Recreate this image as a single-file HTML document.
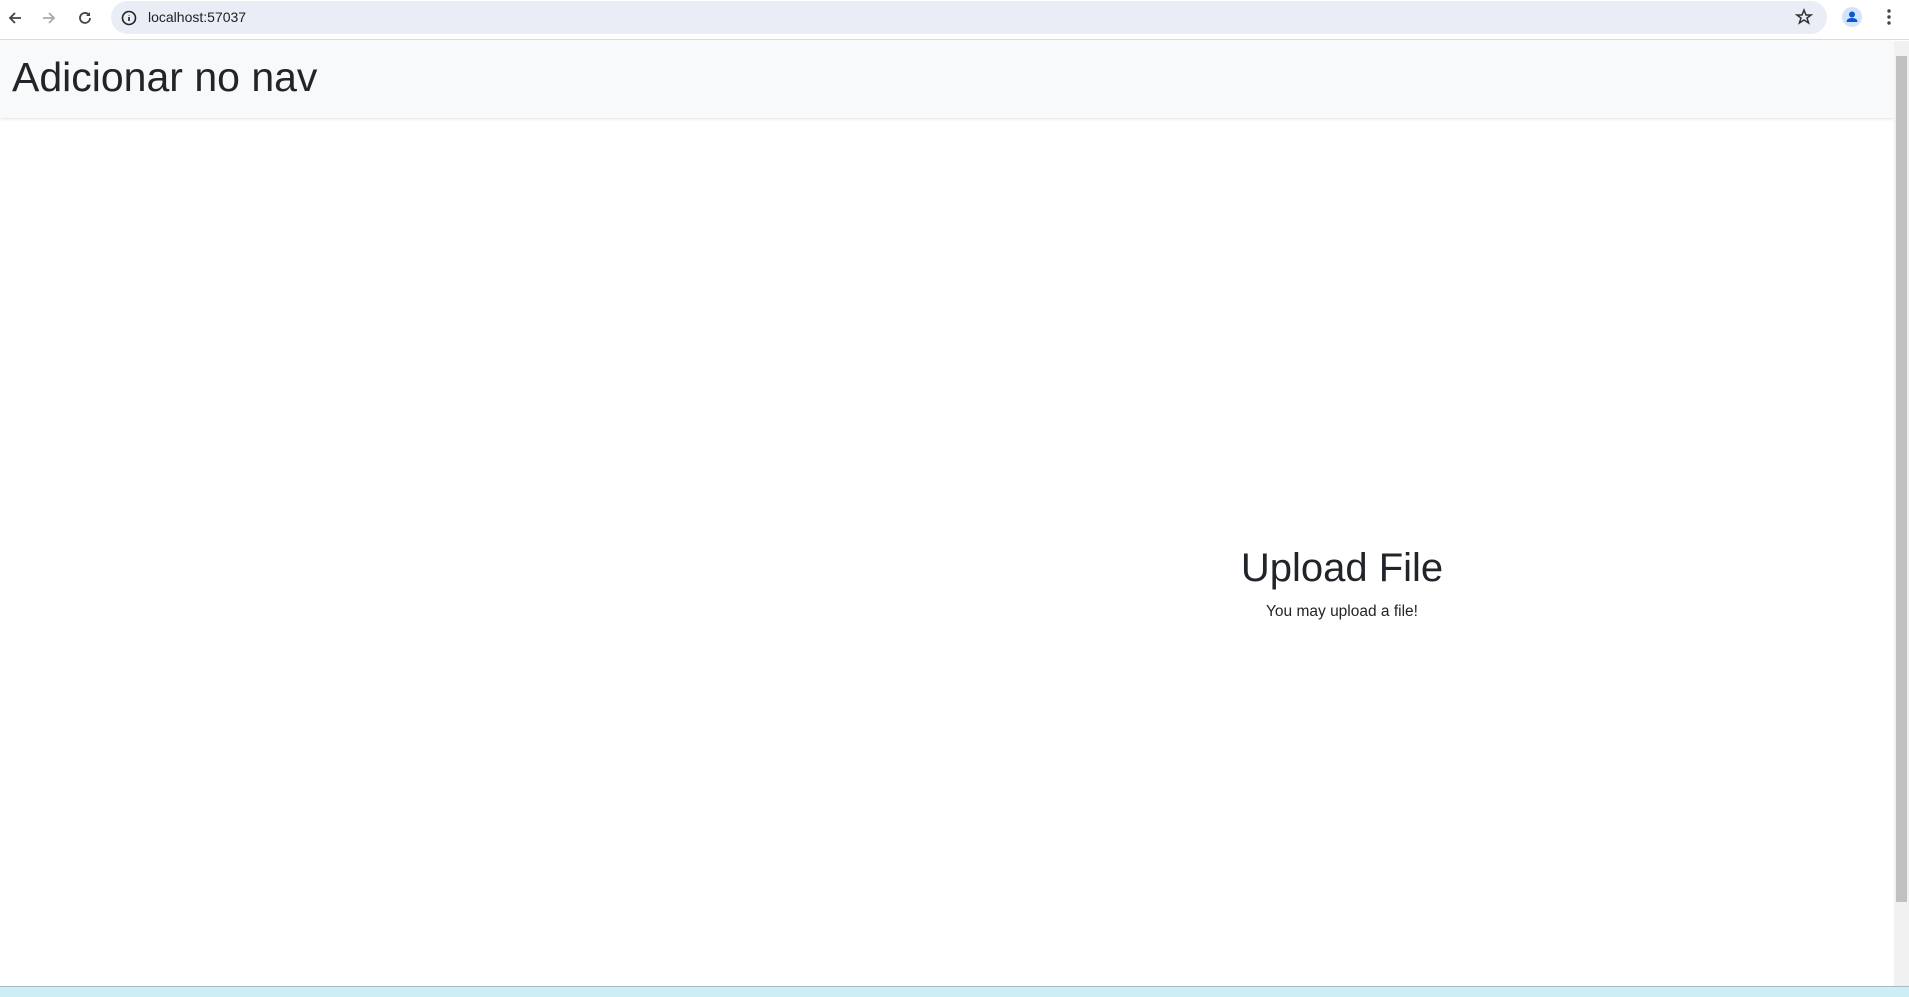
<!DOCTYPE html>
<html><head><meta charset="utf-8"><style>
*{margin:0;padding:0;box-sizing:border-box}
body{width:1909px;height:997px;overflow:hidden;background:#fff;font-family:"Liberation Sans",sans-serif;position:relative;color:#212529}
.chrome{position:absolute;left:0;top:0;width:1909px;height:40px;background:#fff;border-bottom:1px solid #dadce0}
.url{position:absolute;left:111px;top:1px;width:1716px;height:33px;border-radius:17px;background:#e9edf6}
.url span{position:absolute;left:37px;top:8px;font-size:14px;color:#202124}
.nav{position:absolute;left:0;top:41px;width:1894px;height:77px;background:#f8f9fa;box-shadow:0 1px 3px rgba(0,0,0,.12)}
.nav h1{position:absolute;left:12px;top:11px;font-size:41px;font-weight:500;line-height:50px}
.up{position:absolute;left:1142px;width:400px;text-align:center;top:543px}
.up h2{font-size:40px;font-weight:500;line-height:50px}
.up p{font-size:15.5px;margin-top:10px}
.sb{position:absolute;left:1894px;top:41px;width:15px;height:945px;background:#f1f1f1}
.th{position:absolute;left:1896px;top:56px;width:11px;height:846px;background:#c1c1c1}
.task{position:absolute;left:0;top:986px;width:1909px;height:11px;background:#cdeef4;border-top:1px solid #a8bcc4}
</style></head><body>
<div class="chrome">
<svg style="position:absolute;left:5px;top:8px" width="20" height="20" viewBox="0 0 20 20"><path d="M16 10H5M10 5l-5 5 5 5" stroke="#444" stroke-width="1.8" fill="none"/></svg>
<svg style="position:absolute;left:39px;top:8px" width="20" height="20" viewBox="0 0 20 20"><path d="M4 10h11M10 5l5 5-5 5" stroke="#aaa" stroke-width="1.8" fill="none"/></svg>
<svg style="position:absolute;left:75px;top:8px" width="20" height="20" viewBox="0 0 20 20"><path d="M15 10a5 5 0 1 1-1.5-3.6" stroke="#444" stroke-width="1.8" fill="none"/><path d="M15 4v4h-4z" fill="#444"/></svg>
<div class="url"><svg style="position:absolute;left:10px;top:9px" width="16" height="16" viewBox="0 0 16 16"><circle cx="8" cy="8" r="6.5" stroke="#222" stroke-width="1.6" fill="none"/><path d="M8 7v4M8 5v.5" stroke="#222" stroke-width="1.6"/></svg><span>localhost:57037</span>
<svg style="position:absolute;left:1684px;top:7px" width="18" height="18" viewBox="0 0 18 18"><path d="M9 2l2 5h5l-4 3 1.6 5L9 12l-4.6 3L6 10 2 7h5z" stroke="#333" stroke-width="1.5" fill="none"/></svg></div>
<div style="position:absolute;left:1842px;top:7px;width:20px;height:20px;border-radius:50%;background:#d3e3fd"><svg width="20" height="20" viewBox="0 0 20 20"><circle cx="10" cy="7.5" r="3" fill="#0b57d0"/><path d="M4.5 15c0-3 2.5-4 5.5-4s5.5 1 5.5 4z" fill="#0b57d0"/></svg></div>
<svg style="position:absolute;left:1886px;top:7px" width="6" height="20"><circle cx="3" cy="4" r="1.7" fill="#444"/><circle cx="3" cy="10" r="1.7" fill="#444"/><circle cx="3" cy="16" r="1.7" fill="#444"/></svg>
</div>
<div class="nav"><h1>Adicionar no nav</h1></div>
<div class="up"><h2>Upload File</h2><p>You may upload a file!</p></div>
<div class="sb"></div><div class="th"></div>
<div class="task"></div>
</body></html>
